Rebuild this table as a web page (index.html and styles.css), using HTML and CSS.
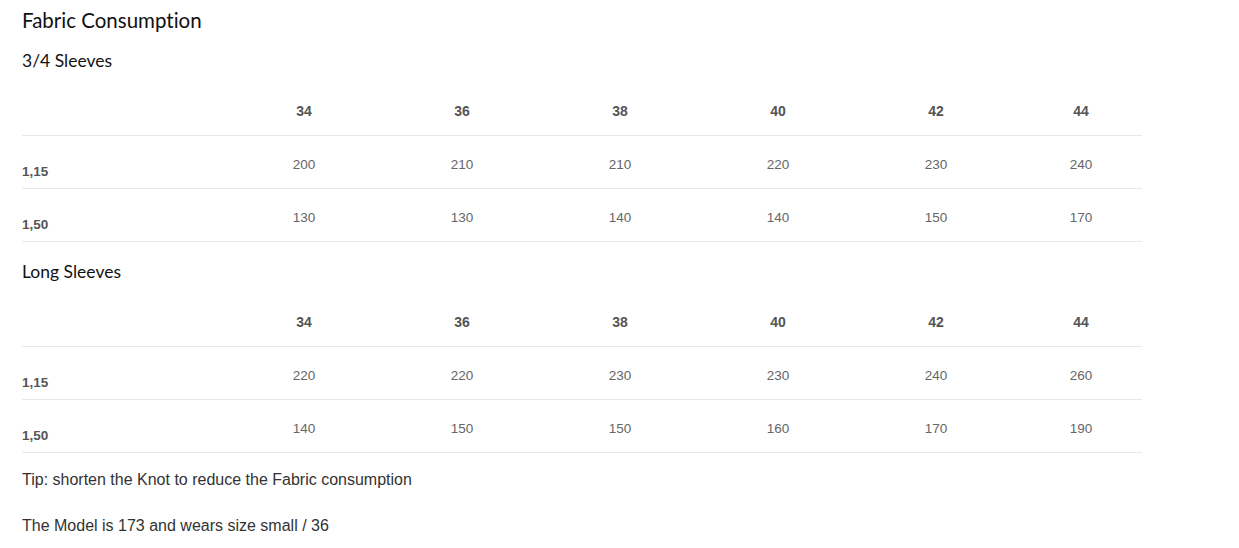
FILE: index.html
```html
<!DOCTYPE html>
<html>
<head>
<meta charset="utf-8">
<link rel="stylesheet" href="styles.css">
</head>
<body>
<div class="page">
  <h1 class="title">Fabric Consumption</h1>
  <h2 class="subtitle">3/4 Sleeves</h2>
  <table class="sizes">
    <colgroup><col class="c-label"><col class="c-size"><col class="c-size"><col class="c-size"><col class="c-size"><col class="c-size"><col class="c-last"></colgroup>
    <thead>
      <tr><th></th><th>34</th><th>36</th><th>38</th><th>40</th><th>42</th><th class="last">44</th></tr>
    </thead>
    <tbody>
      <tr><th class="lbl">1,15</th><td>200</td><td>210</td><td>210</td><td>220</td><td>230</td><td class="last">240</td></tr>
      <tr><th class="lbl">1,50</th><td>130</td><td>130</td><td>140</td><td>140</td><td>150</td><td class="last">170</td></tr>
    </tbody>
  </table>
  <h2 class="subtitle second">Long Sleeves</h2>
  <table class="sizes">
    <colgroup><col class="c-label"><col class="c-size"><col class="c-size"><col class="c-size"><col class="c-size"><col class="c-size"><col class="c-last"></colgroup>
    <thead>
      <tr><th></th><th>34</th><th>36</th><th>38</th><th>40</th><th>42</th><th class="last">44</th></tr>
    </thead>
    <tbody>
      <tr><th class="lbl">1,15</th><td>220</td><td>220</td><td>230</td><td>230</td><td>240</td><td class="last">260</td></tr>
      <tr><th class="lbl">1,50</th><td>140</td><td>150</td><td>150</td><td>160</td><td>170</td><td class="last">190</td></tr>
    </tbody>
  </table>
  <p class="note">Tip: shorten the Knot to reduce the Fabric consumption</p>
  <p class="note">The Model is 173 and wears size small / 36</p>
</div>
</body>
</html>
```
FILE: styles.css
```css
html, body { margin: 0; padding: 0; background: #fff; }
.page { padding: 0 22px; font-family: "Liberation Sans", Arial, sans-serif; }
.title {
  font-family: "Lato", sans-serif;
  font-variant-ligatures: none;
  font-weight: 400;
  font-size: 20.5px;
  line-height: 28px;
  color: #111;
  margin: 6px 0 0 0;
}
.subtitle {
  font-family: "Lato", sans-serif;
  font-variant-ligatures: none;
  font-weight: 400;
  font-size: 17.5px;
  line-height: 26px;
  color: #111;
  margin: 14px 0 0 0;
}
.subtitle.second { margin-top: 17px; }
.sizes {
  width: 1120px;
  border-collapse: collapse;
  table-layout: fixed;
  margin-top: 14px;
}
.c-label { width: 203px; }
.c-size { width: 158px; }
.c-last { width: 127px; }
.sizes thead th {
  font-size: 14px;
  line-height: 15px;
  font-weight: 700;
  color: #555;
  padding: 16px 0;
  text-align: center;
  border-bottom: 1px solid #e8e8e8;
}
.sizes td {
  font-size: 13.5px;
  line-height: 16px;
  color: #666;
  text-align: center;
  vertical-align: top;
  padding: 21px 0 15px 0;
  border-bottom: 1px solid #e8e8e8;
}
.sizes .last { padding-left: 5px; }
.sizes th.lbl {
  font-size: 13.5px;
  line-height: 15px;
  font-weight: 700;
  color: #555;
  text-align: left;
  vertical-align: bottom;
  padding: 0 0 9px 0;
  border-bottom: 1px solid #e8e8e8;
}
.note {
  font-size: 16px;
  line-height: 20px;
  color: #333;
  margin: 17px 0 0 0;
}
.note + .note { margin-top: 26px; }
```
